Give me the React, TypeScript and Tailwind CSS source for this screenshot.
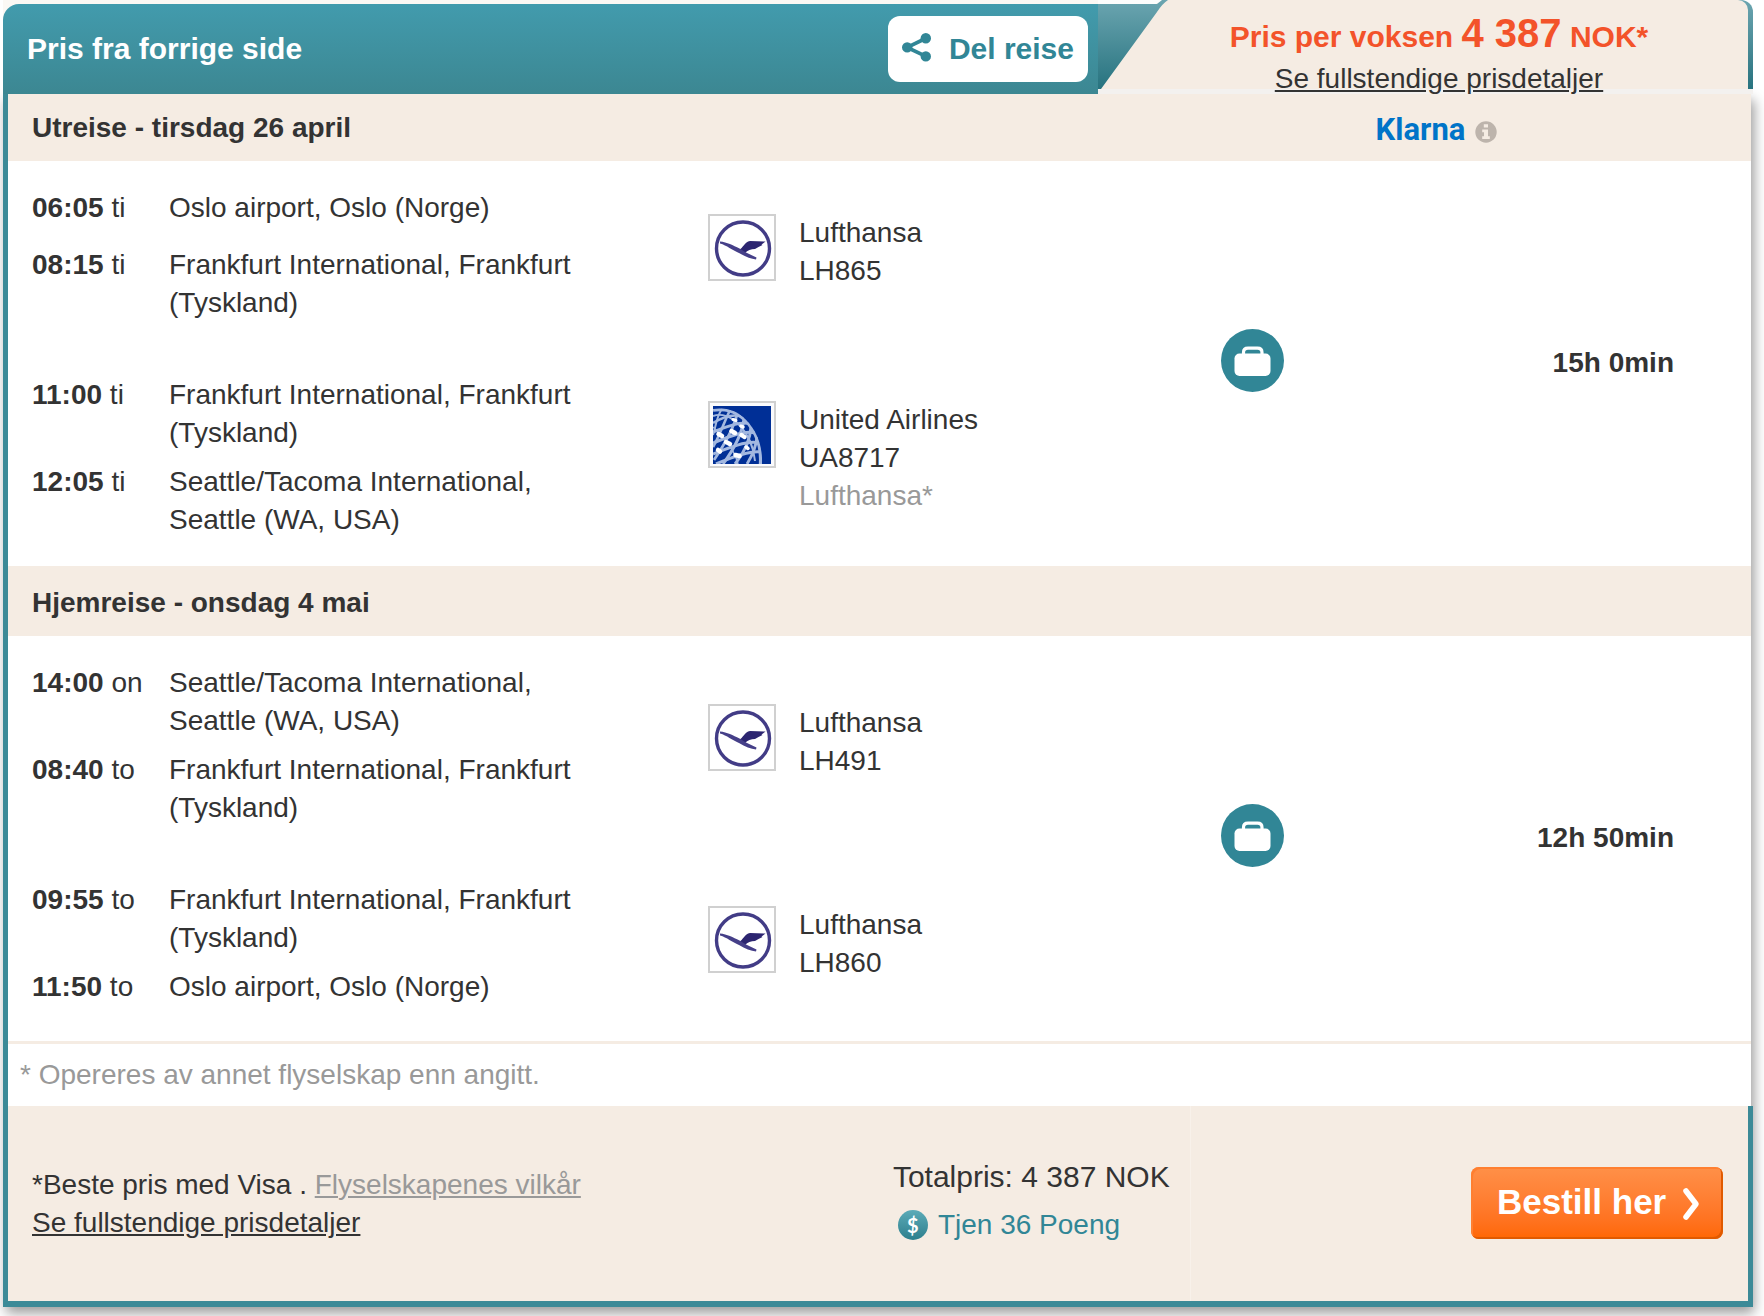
import React from "react";

type Stop = { time: string; day: string; place: string };
type Segment = {
  stops: Stop[];
  airline: string;
  flight: string;
  operator?: string;
  logo: "lufthansa" | "united";
};

const outbound: Segment[] = [
  {
    stops: [
      { time: "06:05", day: "ti", place: "Oslo airport, Oslo (Norge)" },
      { time: "08:15", day: "ti", place: "Frankfurt International, Frankfurt (Tyskland)" },
    ],
    airline: "Lufthansa",
    flight: "LH865",
    logo: "lufthansa",
  },
  {
    stops: [
      { time: "11:00", day: "ti", place: "Frankfurt International, Frankfurt (Tyskland)" },
      { time: "12:05", day: "ti", place: "Seattle/Tacoma International, Seattle (WA, USA)" },
    ],
    airline: "United Airlines",
    flight: "UA8717",
    operator: "Lufthansa*",
    logo: "united",
  },
];

const inbound: Segment[] = [
  {
    stops: [
      { time: "14:00", day: "on", place: "Seattle/Tacoma International, Seattle (WA, USA)" },
      { time: "08:40", day: "to", place: "Frankfurt International, Frankfurt (Tyskland)" },
    ],
    airline: "Lufthansa",
    flight: "LH491",
    logo: "lufthansa",
  },
  {
    stops: [
      { time: "09:55", day: "to", place: "Frankfurt International, Frankfurt (Tyskland)" },
      { time: "11:50", day: "to", place: "Oslo airport, Oslo (Norge)" },
    ],
    airline: "Lufthansa",
    flight: "LH860",
    logo: "lufthansa",
  },
];

function ShareIcon() {
  return (
    <svg viewBox="0 0 29 29" className="mb-1 size-[29px]" fill="currentColor" aria-hidden="true">
      <path d="M24 5.2 5.2 14.4 24 23.4" fill="none" stroke="currentColor" strokeWidth="3.8" />
      <circle cx="5.2" cy="14.4" r="5.2" />
      <circle cx="23.8" cy="5.2" r="5.2" />
      <circle cx="23.8" cy="23.4" r="5.2" />
    </svg>
  );
}

function InfoIcon() {
  return (
    <svg viewBox="0 0 22 22" className="mt-1 size-[22px] shrink-0" role="img" aria-label="Info">
      <circle cx="11" cy="11" r="10.7" fill="#bdb4ac" />
      <path
        d="M8.800 3.200H13V6.600H8.800ZM7.200 8.600H13V15.300H14.800V18H7.200V15.300H9V11.200H7.200Z"
        fill="#f5ece3"
      />
    </svg>
  );
}

function LufthansaLogo() {
  return (
    <svg viewBox="0 0 68 67" className="h-[67px] w-[68px]" role="img" aria-label="Lufthansa">
      <rect x="1" y="1" width="66" height="65" fill="#fff" stroke="#d0d0d0" strokeWidth="2" />
      <circle cx="35" cy="34.500" r="26.500" fill="none" stroke="#423c86" strokeWidth="3.400" />
      <path
        d="M31 36C35 34 36.500 28 42 27L57.500 27.500L53.500 30.500L54.500 31L50.500 33L47 35C43 35.200 39.500 36 37 39Z"
        fill="#2c2570"
      />
      <path
        d="M12 27.500C19 28 25 31.500 31.500 34.500L38 38.500L48.500 43.500L48 45.500C43 45 37 42.500 31 39C24 36 19 31.500 12 29.500Z"
        fill="#453f88"
      />
    </svg>
  );
}

function UnitedLogo() {
  return (
    <svg viewBox="0 0 68 67" className="h-[67px] w-[68px]" role="img" aria-label="United Airlines">
      <defs>
        <clipPath id="united-globe">
          <path d="M5 8C12 7 22 7 31 13C45 23 55 40 54 63H5Z" />
        </clipPath>
      </defs>
      <rect x="1" y="1" width="66" height="65" fill="#fafafc" stroke="#d0d0d0" strokeWidth="2" />
      <rect x="5" y="5" width="58" height="58" fill="#002f96" />
      <g clipPath="url(#united-globe)" fill="none" stroke="#a3b8e0">
        <path d="M5 9C12 8 22 8 31 14C44 23 54 40 52.500 63" strokeWidth="3.400" />
        <path d="M5 15C22 9 44 30 47 60" strokeWidth="2" />
        <path d="M5 22C17 15 28 12 36 17" strokeWidth="2.600" />
        <path d="M5 31C18 26 32 20 42 23" strokeWidth="2.800" />
        <path d="M5 42C20 36 36 29 47 32" strokeWidth="3" />
        <path d="M5 53C20 47 40 39 51 42" strokeWidth="3" />
        <path d="M8 63C22 57 42 49 53 51" strokeWidth="3" />
        <path d="M14 8C8 16 8 26 5 34" strokeWidth="2" />
        <path d="M22 9C15 24 11 36 5 46" strokeWidth="2.600" />
        <path d="M29 13C26 28 16 44 6 59" strokeWidth="2.800" />
        <path d="M36 18C34 34 26 48 15 63" strokeWidth="3" />
        <path d="M43 26C42 40 36 52 27 63" strokeWidth="3" />
        <path d="M49 36C48 46 44 55 39 63" strokeWidth="2.800" />
        <path d="M5 26C15 34 26 48 30 63" strokeWidth="1.600" />
      </g>
      <g stroke="#fff" strokeWidth="4.500" strokeLinecap="round">
        <path d="M25 18.500 28 19.500" strokeWidth="3" />
        <path d="M33 25 35 26" strokeWidth="3.500" />
        <path d="M10.500 33 14 35" />
        <path d="M23.500 30 27 32" />
        <path d="M33.500 34 36.500 36" />
        <path d="M18 41 22 43" />
        <path d="M10 49 12 50.500" />
        <path d="M27.500 54 31.500 55" />
        <path d="M38 46 40 47.500" strokeWidth="3.500" />
      </g>
    </svg>
  );
}

function BagIcon() {
  return (
    <svg viewBox="0 0 63 63" className="mb-2 size-[63px]" role="img" aria-label="Bagasje inkludert">
      <circle cx="31.500" cy="31.500" r="31.500" fill="#318696" />
      <rect x="13.500" y="24.500" width="36" height="22.500" rx="5" fill="#fff" />
      <path
        d="M22.500 26V23.500Q22.500 19.200 27 19.200H36.500Q41 19.200 41 23.500V26"
        fill="none"
        stroke="#fff"
        strokeWidth="3.200"
      />
    </svg>
  );
}

function CoinIcon() {
  return (
    <span
      className="flex size-[30px] items-center justify-center rounded-full bg-linear-to-b from-[#5cabb8] to-[#2c7f8d] font-['Lato',sans-serif] text-[20px] leading-none font-bold text-white"
      aria-hidden="true"
    >
      $
    </span>
  );
}

function Journey({ segments, duration }: { segments: Segment[]; duration: string }) {
  return (
    <div className="flex bg-white pt-7 pr-[77px] pb-[27px] pl-6">
      <div className="flex flex-[1189] flex-col gap-[54px]">
        {segments.map((s) => (
          <div key={s.flight} className="flex items-center">
            <ul className="flex flex-[676] flex-col gap-[11px]">
              {s.stops.map((stop) => (
                <li key={stop.time} className="flex min-h-[46px]">
                  <span className="w-[137px] shrink-0">
                    <b>{stop.time}</b> {stop.day}
                  </span>
                  <span className="max-w-[420px]">{stop.place}</span>
                </li>
              ))}
            </ul>
            <div className="flex min-h-[84px] flex-[513] items-start gap-[23px]">
              {s.logo === "lufthansa" ? <LufthansaLogo /> : <UnitedLogo />}
              <p>
                {s.airline}
                <br />
                {s.flight}
                {s.operator && <span className="block text-[#999]">{s.operator}</span>}
              </p>
            </div>
          </div>
        ))}
      </div>
      <div className="flex flex-[453] items-center justify-between">
        <BagIcon />
        <b className="pb-[2px]">{duration}</b>
      </div>
    </div>
  );
}

export default function App() {
  return (
    <main className="bg-white pb-[9px] pl-[3px] font-['Liberation_Sans',Arial,sans-serif] text-[28px] leading-[38px] text-[#333]">
      <header className="flex pr-[11px]">
        <div className="flex flex-[1095] bg-[#fbf8f4] pt-1">
          <div className="flex h-[90px] flex-1 items-center justify-between rounded-tl-2xl bg-linear-to-b from-[#429bad] to-[#3c8792] pr-[10px] pl-6">
            <h1 className="text-[30px] font-bold text-white">Pris fra forrige side</h1>
            <button
              type="button"
              className="flex h-[66px] w-[200px] items-center justify-between rounded-xl bg-white pr-[14px] pl-[14px] text-[30px] font-bold text-[#318696]"
            >
              <ShareIcon />
              Del reise
            </button>
          </div>
        </div>
        <div className="relative h-[94px] flex-[655] bg-[#f3f1ef]">
          <div className="h-[89px] bg-white">
            <div className="h-full rounded-tr-xl bg-linear-to-b from-[#6ba5b0] to-[#27737f] pr-[5px]">
              <div className="h-full rounded-tr-[10px] bg-[#f5ece3]" />
            </div>
          </div>
          <svg
            viewBox="0 0 72 89"
            className="absolute top-0 left-0 h-[89px] w-[72px]"
            aria-hidden="true"
          >
            <defs>
              <linearGradient id="slant" x1="0" y1="0" x2="0" y2="1">
                <stop offset="0" stopColor="#6ba5b0" />
                <stop offset="1" stopColor="#27737f" />
              </linearGradient>
            </defs>
            <path d="M0 0H66L58 4H0Z" fill="#fdfdfc" />
            <path d="M0 4H59L64 0H70Q64 4 59 12L3 89H0Z" fill="url(#slant)" />
          </svg>
          <div className="absolute inset-0 flex flex-col items-center pl-[27px]">
            <p className="pt-[10px] text-[30px] leading-[46px] font-bold whitespace-nowrap text-[#f3532a]">
              Pris per voksen <span className="text-[40px]">4 387</span> NOK*
            </p>
            <a href="#prisdetaljer" className="underline">
              Se fullstendige prisdetaljer
            </a>
          </div>
        </div>
      </header>

      <div className="mr-[13px] shadow-[3px_6px_12px_rgba(0,0,0,0.4)]">
        <div className="border-l-[5px] border-[#3c8a97]">
          <div className="flex h-[67px] items-center bg-[#f5ece3]">
            <h2 className="flex-[1090] pl-6 font-bold">Utreise - tirsdag 26 april</h2>
            <div className="flex flex-[653] items-center justify-center gap-[10px] pt-1 pl-10">
              <span className="font-['Roboto',sans-serif] text-[31px] font-bold text-[#0074c8]">
                Klarna
              </span>
              <InfoIcon />
            </div>
          </div>
          <Journey segments={outbound} duration="15h 0min" />
          <div className="flex h-[70px] items-center bg-[#f5ece3] pt-[3px]">
            <h2 className="pl-6 font-bold">Hjemreise - onsdag 4 mai</h2>
          </div>
          <Journey segments={inbound} duration="12h 50min" />
          <p className="border-t-[3px] border-[#f5ece3] bg-white py-3 pl-3 text-[#999]">
            * Opereres av annet flyselskap enn angitt.
          </p>
        </div>

        <footer className="-mr-[2px] flex h-[201px] border-x-[5px] border-b-[6px] border-[#3c8a97] bg-[#f5ece3]">
          <div className="flex w-[68%] items-center border-r border-[#f8f1ea] pl-6">
            <p className="flex-[863]">
              *Beste pris med Visa .{" "}
              <a href="#vilkar" className="text-[#999] underline">
                Flyselskapenes vilkår
              </a>
              <br />
              <a href="#prisdetaljer" className="underline">
                Se fullstendige prisdetaljer
              </a>
            </p>
            <div className="flex flex-[298] flex-col gap-[10px] pb-[6px]">
              <p className="text-[30px]">Totalpris: 4 387 NOK</p>
              <a href="#poeng" className="flex items-center gap-[10px] pl-[5px] text-[#318696]">
                <CoinIcon />
                Tjen 36 Poeng
              </a>
            </div>
          </div>
          <div className="flex flex-1 items-center justify-end pr-[25px] pb-[2px]">
            <button
              type="button"
              className="flex h-[72px] w-[252px] items-center justify-between rounded-lg bg-linear-to-b from-[#ff9048] to-[#ff6700] pr-[23px] pb-[2px] pl-[26px] text-[35px] font-bold text-white shadow-[inset_-2px_-2px_0_#e05a00,inset_2px_2px_0_#ff7f30]"
            >
              Bestill her
              <svg viewBox="0 0 18 34" className="mt-1 h-[34px] w-[18px]" aria-hidden="true">
                <path
                  d="M4 4 14 17 4 30"
                  fill="none"
                  stroke="#fff"
                  strokeWidth="5.500"
                  strokeLinecap="round"
                  strokeLinejoin="round"
                />
              </svg>
            </button>
          </div>
        </footer>
      </div>
    </main>
  );
}
